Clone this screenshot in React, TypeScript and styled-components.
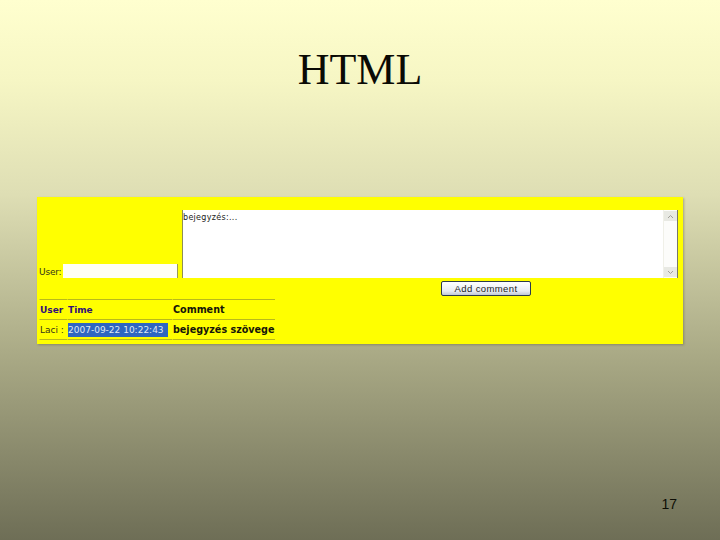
import React from "react";
import styled, { createGlobalStyle } from "styled-components";

const Global = createGlobalStyle`
  html, body { margin: 0; padding: 0; }
  body { width: 720px; height: 540px; overflow: hidden; }
`;

const Slide = styled.div`
  width: 720px;
  height: 540px;
  box-sizing: border-box;
  display: flex;
  flex-direction: column;
  background: linear-gradient(180deg, #ffffcf 0%, #f6f6c4 15%, #dedeb4 36%, #a9a985 66%, #6e6e56 100%);
`;

const Title = styled.h1`
  margin: 43px 0 0;
  height: 54px;
  font: 400 44px/54px "Liberation Serif", serif;
  color: #0a0a05;
  text-align: center;
`;

const Shot = styled.div`
  margin: 100px 37px 0;
  height: 147px;
  box-sizing: border-box;
  background: #ffff00;
  padding: 13px 0 0 2px;
  display: flex;
  flex-direction: column;
  box-shadow: 1px 1px 2px rgba(70, 70, 40, 0.35);
`;

const FormRow = styled.div`
  display: flex;
  align-items: flex-end;
  height: 68px;
`;

const UserLabel = styled.span`
  width: 24px;
  font: 400 9px/12px "DejaVu Sans", sans-serif;
  color: #33331a;
  letter-spacing: -0.2px;
`;

const UserInput = styled.div`
  width: 115px;
  height: 14px;
  box-sizing: border-box;
  background: #fffff6;
  border-right: 1px solid #9a9a55;
`;

const TextArea = styled.div`
  margin-left: 4px;
  width: 496px;
  height: 68px;
  box-sizing: border-box;
  background: #ffffff;
  border-left: 1px solid #8f8f55;
  border-right: 1px solid #77776a;
  display: flex;
  justify-content: space-between;
`;

const AreaText = styled.span`
  padding: 3px 0 0 0;
  font: 400 8px/9px "DejaVu Sans", sans-serif;
  letter-spacing: 0.3px;
  color: #222;
`;

const ScrollBar = styled.div`
  width: 13px;
  display: flex;
  flex-direction: column;
  justify-content: space-between;
  background: #fcfcfa;
  border-left: 1px solid #f0f0e8;
`;

const ScrollArrow = styled.div`
  height: 10px;
  margin: 1px 0;
  background: #e8e9e3;
  display: flex;
  align-items: center;
  justify-content: center;
  color: #a0a09a;
`;

const ButtonRow = styled.div`
  display: flex;
  padding: 3px 0 0 402px;
`;

const AddButton = styled.button`
  width: 90px;
  height: 15px;
  padding: 0;
  box-sizing: border-box;
  border: 1px solid #2c3b4c;
  border-radius: 2px;
  background: linear-gradient(180deg, #ffffff, #e8ecf2 70%, #bfc8d6);
  font: 400 9.5px/12px "Liberation Sans", sans-serif;
  letter-spacing: 0.4px;
  color: #222;
`;

const Table = styled.table`
  margin-top: 3px;
  width: 236px;
  border-collapse: separate;
  border-spacing: 0;
  table-layout: fixed;
`;

const Cell = styled.td<{ $w?: number; $head?: boolean; $strong?: boolean }>`
  width: ${(p) => p.$w ?? 0}px;
  height: 20px;
  padding: 0;
  box-sizing: border-box;
  border-top: 1px solid #b9b91a;
  border-left: 1px solid #ffff00;
  white-space: nowrap;
  font-family: "DejaVu Sans", sans-serif;
  font-size: ${(p) => (p.$strong ? 9.6 : 9)}px;
  font-weight: ${(p) => (p.$head || p.$strong ? 700 : 400)};
  color: ${(p) => (p.$strong ? "#16160a" : p.$head ? "#30107a" : "#33331a")};
`;

const BottomCell = styled.td`
  height: 1px;
  padding: 0;
  border-top: 1px solid #b9b91a;
  border-left: 1px solid #ffff00;
`;

const Selected = styled.span`
  display: block;
  width: 100px;
  overflow: visible;
  background: #2f66c0;
  color: #dfe8f5;
  font-size: 9px;
  line-height: 14px;
`;

const PageNumber = styled.div`
  margin: auto 43px 28px 0;
  align-self: flex-end;
  font: 400 14px/16px "Liberation Sans", sans-serif;
  color: #0d0d05;
`;

const Arrow = ({ up }: { up?: boolean }) => (
  <svg width="7" height="5" viewBox="0 0 7 5" aria-hidden="true">
    <path d={up ? "M1 4 L3.5 1.5 L6 4" : "M1 1 L3.5 3.5 L6 1"} fill="none" stroke="currentColor" strokeWidth="1" />
  </svg>
);

export default function App() {
  return (
    <Slide>
      <Global />
      <Title>HTML</Title>
      <Shot>
        <FormRow>
          <UserLabel>User:</UserLabel>
          <UserInput />
          <TextArea>
            <AreaText>bejegyzés:...</AreaText>
            <ScrollBar>
              <ScrollArrow><Arrow up /></ScrollArrow>
              <ScrollArrow><Arrow /></ScrollArrow>
            </ScrollBar>
          </TextArea>
        </FormRow>
        <ButtonRow>
          <AddButton>Add comment</AddButton>
        </ButtonRow>
        <Table>
          <tbody>
            <tr>
              <Cell $w={28} $head>User</Cell>
              <Cell $w={105} $head>Time</Cell>
              <Cell $w={103} $head $strong>Comment</Cell>
            </tr>
            <tr>
              <Cell $w={28}>Laci :</Cell>
              <Cell $w={105}><Selected>2007-09-22 10:22:43</Selected></Cell>
              <Cell $w={103} $strong>bejegyzés szövege</Cell>
            </tr>
            <tr>
              <BottomCell />
              <BottomCell />
              <BottomCell />
            </tr>
          </tbody>
        </Table>
      </Shot>
      <PageNumber>17</PageNumber>
    </Slide>
  );
}
